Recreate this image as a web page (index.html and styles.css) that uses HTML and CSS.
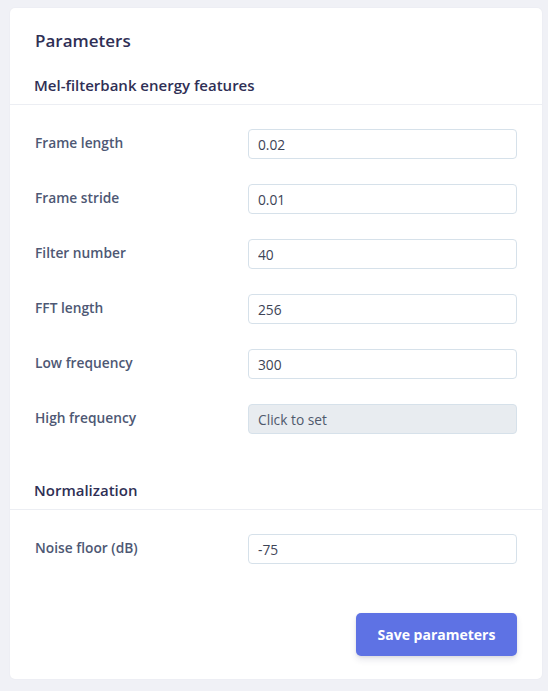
FILE: index.html
```html
<!DOCTYPE html>
<html lang="en">
<head>
<meta charset="utf-8">
<title>Parameters</title>
<link rel="stylesheet" href="styles.css">
</head>
<body>
<div class="card">
  <h2 class="card-title">Parameters</h2>

  <h3 class="section-head">Mel-filterbank energy features</h3>
  <div class="section-body">
    <div class="row"><label class="label">Frame length</label><input class="input" type="text" value="0.02"></div>
    <div class="row"><label class="label">Frame stride</label><input class="input" type="text" value="0.01"></div>
    <div class="row"><label class="label">Filter number</label><input class="input" type="text" value="40"></div>
    <div class="row"><label class="label">FFT length</label><input class="input" type="text" value="256"></div>
    <div class="row"><label class="label">Low frequency</label><input class="input" type="text" value="300"></div>
    <div class="row"><label class="label">High frequency</label><input class="input input-disabled" type="text" value="Click to set" readonly></div>
  </div>

  <h3 class="section-head">Normalization</h3>
  <div class="section-body">
    <div class="row"><label class="label">Noise floor (dB)</label><input class="input" type="text" value="-75"></div>
  </div>

  <div class="card-footer">
    <button class="btn-primary" type="button">Save parameters</button>
  </div>
</div>
</body>
</html>
```
FILE: styles.css
```css
* { box-sizing: border-box; }

html, body {
  margin: 0;
  padding: 0;
  background: #f0f1f6;
}

body {
  padding: 8px 6px 12px 10px;
  font-family: "Open Sans", "Liberation Sans", sans-serif;
}

.card {
  background: #ffffff;
  border-radius: 5px;
  box-shadow: 0 0 2px rgba(50, 50, 93, 0.06);
  height: 671px;
  display: flex;
  flex-direction: column;
}

.card-title {
  margin: 0;
  padding: 21px 24px 0 25px;
  font-size: 17px;
  line-height: 24px;
  font-weight: 600;
  color: #2f2f55;
}

.section-head {
  margin: 0;
  padding: 22px 24px 9px 24px;
  font-size: 15px;
  line-height: 20px;
  font-weight: 600;
  color: #2f2f55;
  border-bottom: 1px solid #eceef3;
}

.section-body {
  padding: 24px 25px 24px 25px;
  display: flex;
  flex-direction: column;
  gap: 25px;
}

.row {
  display: flex;
  align-items: center;
  height: 30px;
}

.label {
  width: 213px;
  flex: none;
  font-size: 13.75px;
  font-weight: 600;
  color: #4e5874;
  line-height: 20px;
  margin-bottom: 2px;
}

.input {
  width: 269px;
  height: 30px;
  margin: 0;
  padding: 0 9px;
  border: 1px solid #d6e1ea;
  border-radius: 4px;
  background: #ffffff;
  font-family: "Open Sans", "Liberation Sans", sans-serif;
  font-size: 13.75px;
  color: #3d4456;
  outline: none;
}

.input-disabled {
  background: #e8ecf0;
  color: #4f596c;
}

.card-footer {
  margin-top: auto;
  padding: 0 25px 23px 25px;
  display: flex;
  justify-content: flex-end;
}

.btn-primary {
  width: 161px;
  height: 43px;
  border: none;
  border-radius: 5px;
  background: #5e72e4;
  color: #ffffff;
  font-family: "Open Sans", "Liberation Sans", sans-serif;
  font-size: 14px;
  font-weight: 700;
  box-shadow: 0 4px 6px rgba(50, 50, 93, 0.11), 0 1px 3px rgba(0, 0, 0, 0.08);
  cursor: pointer;
}
```
